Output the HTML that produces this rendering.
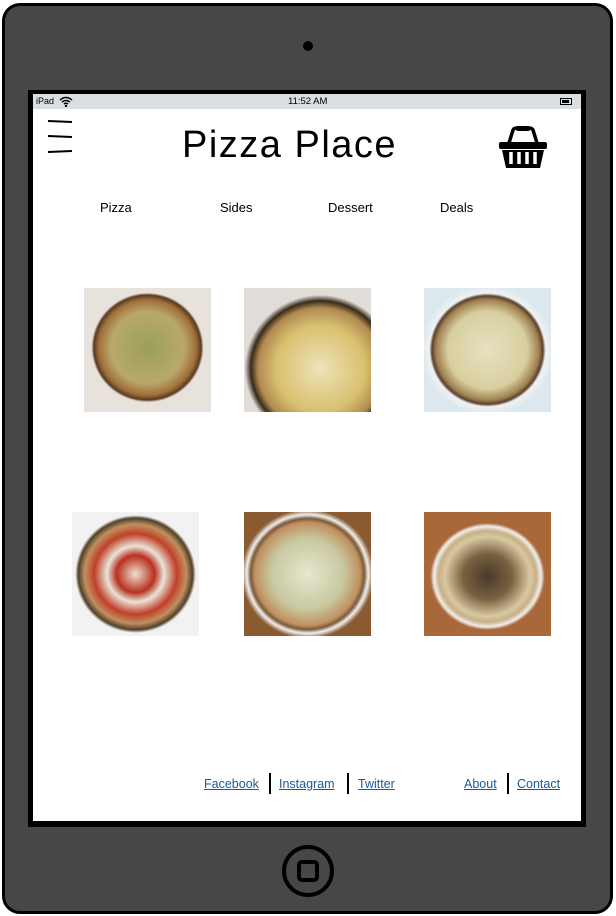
<!DOCTYPE html>
<html><head><meta charset="utf-8"><style>
*{margin:0;padding:0;box-sizing:border-box}
body{width:616px;height:916px;background:#fff;position:relative;overflow:hidden;font-family:"Liberation Sans",sans-serif}
.dev{position:absolute;left:2px;top:3px;width:611px;height:911px;background:#474747;border:3px solid #000;border-radius:18px}
.cam{position:absolute;left:303px;top:41px;width:10px;height:10px;border-radius:50%;background:#000}
.scr{position:absolute;left:28px;top:90px;width:558px;height:737px;background:#000}
.in{position:absolute;left:33px;top:94px;width:548px;height:727px;background:#fff}
.sb{position:absolute;left:0;top:0;width:548px;height:15px;background:#d8dee1;font-size:9px;color:#000}
.abs{position:absolute}
.nav{position:absolute;top:200px;font-size:13px;color:#000}
.p{position:absolute;width:127px;height:124px}
.ft{position:absolute;top:777px;font-size:12.5px;color:#1a5a9c;text-decoration:underline}
.bar{position:absolute;top:773px;width:2px;height:21px;background:#000}
</style></head><body>
<div class="dev"></div>
<div class="cam"></div>
<div class="scr"></div>
<div class="in">
 <div class="sb">
  <span class="abs" style="left:3px;top:2px">iPad</span>
  <svg class="abs" style="left:26px;top:2px" width="14" height="11" viewBox="0 0 14 11"><path d="M1 4Q7-1 13 4M3 6Q7 3 11 6M5 8Q7 6.5 9 8" fill="none" stroke="#000" stroke-width="1.5"/><circle cx="7" cy="10" r="1.2"/></svg>
  <span class="abs" style="left:255px;top:2px;font-size:9.5px">11:52 AM</span>
  <div class="abs" style="left:527px;top:4px;width:12px;height:7px;border:1px solid #000;padding:1px"><div style="width:7px;height:3px;background:#000"></div></div>
 </div>
</div>
<svg class="abs" style="left:46px;top:118px" width="28" height="38"><path d="M2 3L26 4M2 18L26 19M2 34L26 33" stroke="#000" stroke-width="2" fill="none"/></svg>
<div class="abs" style="left:182px;top:124px;font-size:38px;letter-spacing:1.5px;color:#000">Pizza Place</div>
<svg class="abs" style="left:498px;top:124px" width="50" height="46" viewBox="0 0 50 46"><path d="M11 19L15 6Q16 4 19 4H31Q34 4 35 6L39 19" fill="none" stroke="#000" stroke-width="3.5"/><rect x="18" y="2" width="14" height="5" rx="2"/><rect x="1" y="18" width="48" height="7" rx="2"/><path d="M4 26H46L42 44H8Z"/><path d="M13 28V40M21 28V40M29 28V40M37 28V40" stroke="#fff" stroke-width="3.5"/></svg>
<div class="nav" style="left:100px">Pizza</div>
<div class="nav" style="left:220px">Sides</div>
<div class="nav" style="left:328px">Dessert</div>
<div class="nav" style="left:440px">Deals</div>
<div class="p" style="left:84px;top:288px;background:radial-gradient(ellipse 48% 48% at 50% 48%,#9aa05a 0,#b9a86a 60%,#a0703a 80%,#5a3a20 88%,#e8e2dc 92%)"></div>
<div class="p" style="left:244px;top:288px;background:radial-gradient(ellipse 70% 70% at 60% 65%,#efe4b8 0,#d9c070 50%,#b08a50 70%,#3a2a1a 78%,#e0ddd8 85%)"></div>
<div class="p" style="left:424px;top:288px;background:radial-gradient(ellipse 52% 52% at 50% 50%,#e8e0c0 0,#d8cfa0 60%,#a08050 78%,#5a4030 84%,#f0f2f4 88%,#dde8ee 100%)"></div>
<div class="p" style="left:72px;top:512px;background:radial-gradient(ellipse 50% 50% at 50% 50%,#f0e0d0 0,#b83020 30%,#e8e4d8 45%,#c04028 65%,#c09060 80%,#50402a 90%,#f2f2f2 95%)"></div>
<div class="p" style="left:244px;top:512px;background:radial-gradient(ellipse 52% 52% at 50% 50%,#e8e6d0 0,#c8c8a0 55%,#c09060 80%,#7a5a3a 86%,#f0f0ee 92%,#8a5a30 100%)"></div>
<div class="p" style="left:424px;top:512px;background:radial-gradient(ellipse 48% 46% at 50% 52%,#4a3a2a 0,#7a6040 40%,#d8c8a0 70%,#c8b088 80%,#f0eeea 88%,#a8683a 94%)"></div>
<div class="ft" style="left:204px">Facebook</div>
<div class="bar" style="left:269px"></div>
<div class="ft" style="left:279px">Instagram</div>
<div class="bar" style="left:347px"></div>
<div class="ft" style="left:358px">Twitter</div>
<div class="ft" style="left:464px">About</div>
<div class="bar" style="left:507px"></div>
<div class="ft" style="left:517px">Contact</div>
<div class="abs" style="left:282px;top:845px;width:52px;height:52px;border:4px solid #000;border-radius:50%"></div>
<div class="abs" style="left:297px;top:860px;width:22px;height:22px;border:4px solid #000;border-radius:5px"></div>
</body></html>
